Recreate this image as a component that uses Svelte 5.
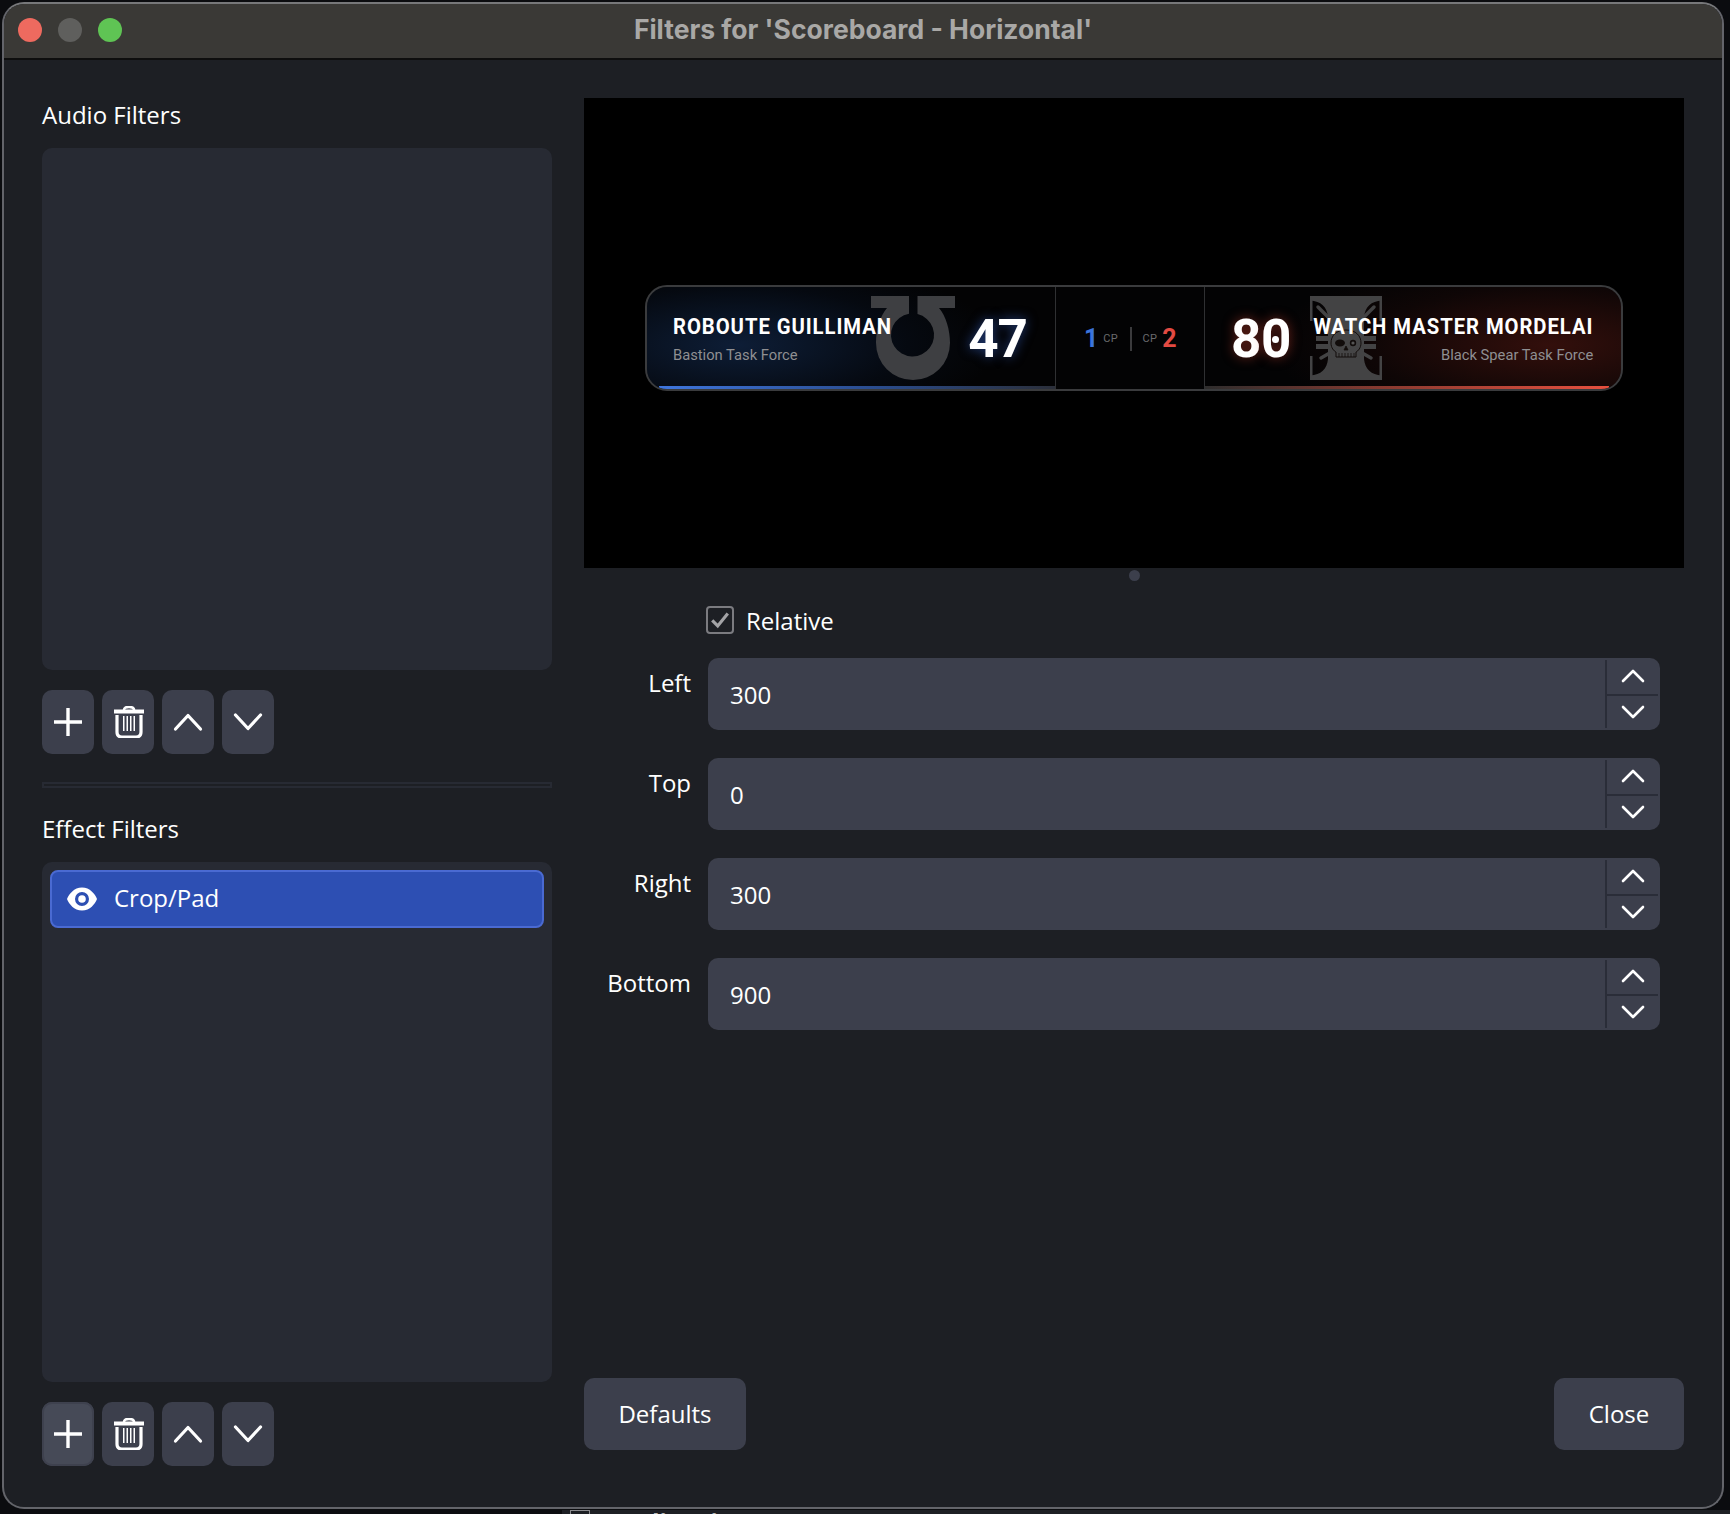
<script>
  const fields = [
    { label: 'Left', value: '300' },
    { label: 'Top', value: '0' },
    { label: 'Right', value: '300' },
    { label: 'Bottom', value: '900' }
  ];
</script>

{#snippet plus()}
  <svg class="ico" viewBox="0 0 32 32"><path d="M16 2V30M2 16H30" stroke="#fff" stroke-width="3.4" fill="none"/></svg>
{/snippet}
{#snippet trash()}
  <svg class="ico" viewBox="-1 0 32 32" fill="none" stroke="#fff">
    <path d="M1 5.5H31" stroke-width="4"/>
    <path d="M11 4C11 1.5 13 1 16 1S21 1.5 21 4" stroke-width="2.6"/>
    <path d="M4 9V26C4 29.500 6 31 9 31H23C26 31 28 29.500 28 26V9" stroke-width="3.2"/>
    <path d="M11.500 10V25M15 10V25M18.500 10V25M22 10V25" stroke-width="1.500" transform="translate(-.75 0)"/>
  </svg>
{/snippet}
{#snippet up()}
  <svg class="ico" viewBox="0 0 32 32"><path d="M3.500 23L16 9.500L28.500 23" stroke="#fff" stroke-width="3.2" stroke-linecap="round" stroke-linejoin="round" fill="none"/></svg>
{/snippet}
{#snippet down()}
  <svg class="ico" viewBox="0 0 32 32"><path d="M3.500 9L16 22.500L28.500 9" stroke="#fff" stroke-width="3.200" stroke-linecap="round" stroke-linejoin="round" fill="none"/></svg>
{/snippet}
{#snippet tools(hot)}
  <div class="tools">
    <button class="tool" class:hot>{@render plus()}</button>
    <button class="tool">{@render trash()}</button>
    <button class="tool">{@render up()}</button>
    <button class="tool">{@render down()}</button>
  </div>
{/snippet}

<div class="screen">
  <div class="behind"><span class="bcheck"></span><span class="btext">Audio Mixer</span></div>
  <div class="window">
    <header class="titlebar">
      <div class="lights"><i class="red"></i><i class="grey"></i><i class="green"></i></div>
      <div class="title">Filters for 'Scoreboard - Horizontal'</div>
    </header>
    <div class="body">
      <aside class="left">
        <div class="label first">Audio Filters</div>
        <div class="panel panel-a"></div>
        {@render tools(false)}
        <div class="sep"></div>
        <div class="label second">Effect Filters</div>
        <div class="panel panel-b">
          <div class="item">
            <svg class="eye" viewBox="0 0 30 24">
              <path fill-rule="evenodd" fill="#fff" d="M15 0.500C23 0.500 28 7 30 12C28 17 23 23.500 15 23.500S2 17 0 12C2 7 7 0.500 15 0.500ZM15 5A7 7 0 1 0 15 19A7 7 0 1 0 15 5Z"/>
              <circle cx="15" cy="12" r="3.800" fill="#fff"/>
            </svg>
            <span class="item-text">Crop/Pad</span>
          </div>
        </div>
        {@render tools(true)}
      </aside>

      <main class="right">
        <div class="preview">
          <div class="board">
            <div class="team home">
              <svg class="crest crest-home" viewBox="0 0 100 96">
                <path fill="#3e3f42" d="M11 6H49V23.800A21.500 21.500 0 1 0 57.500 24.100V6H95V18H79C86 26 90 40 90 53A37 37 0 0 1 16 53C16 40 20 26 27 18H11Z"/>
              </svg>
              <div class="who who-home">
                <div class="name">ROBOUTE GUILLIMAN</div>
                <div class="force">Bastion Task Force</div>
              </div>
              <div class="score sc-home">47</div>
            </div>
            <div class="cp">
              <span class="cpn blue">1</span><span class="cpl">CP</span>
              <span class="cpdiv"></span>
              <span class="cpl">CP</span><span class="cpn red-t">2</span>
            </div>
            <div class="team away">
              <svg class="crest crest-away" viewBox="0 0 100 96">
                <path fill="#434344" d="M11 6H83V10.500C72 11 66 17 65 27V69C66 79 72 85 83 85.500V90H11V85.500C22 85 28 79 29 69V27C28 17 22 11 11 10.500Z"/>
                <path d="M11 10V31H13.500V10ZM83 10V31H80.500V10ZM11 66V86H13.500V66ZM83 66V86H80.500V66Z" fill="#434344"/>
                <g stroke="#434344" stroke-width="3.500" stroke-linecap="round">
                  <path d="M19 17L31 29M75 17L63 29M22 68L36 60M72 68L58 60"/>
                </g>
                <g fill="#434344">
                  <rect x="17" y="46" width="14" height="5"/><rect x="17" y="54" width="15" height="5"/>
                  <rect x="63" y="46" width="14" height="5"/><rect x="62" y="54" width="15" height="5"/>
                </g>
                <path d="M47 40C37 40 32 46 32 53C32 58 35 61 37 62V67H57V62C59 61 62 58 62 53C62 46 57 40 47 40Z" fill="#454546" stroke="#120c0b" stroke-width="1"/>
                <ellipse cx="41" cy="53" rx="5" ry="3.500" fill="#110c0b"/>
                <circle cx="54" cy="53" r="3.200" fill="#110c0b"/><circle cx="54" cy="53" r="1.600" fill="#555"/>
                <path d="M47 56L45 60H49ZM40 63V67M43 63V67M46 63V67M49 63V67M52 63V67M55 63V67" stroke="#110c0b" stroke-width=".8" fill="#110c0b"/>
              </svg>
              <div class="score sc-away">8<span class="zero">0</span></div>
              <div class="who who-away">
                <div class="name">WATCH MASTER MORDELAI</div>
                <div class="force">Black Spear Task Force</div>
              </div>
            </div>
          </div>
        </div>
        <div class="handle"><i></i></div>

        <label class="check">
          <span class="box">
            <svg viewBox="0 0 24 24"><path d="M3.500 12.500L9.500 18.500L20.500 5" stroke="#a3a3a6" stroke-width="3.400" fill="none"/></svg>
          </span>
          <span>Relative</span>
        </label>

        <div class="form">
          {#each fields as f}
            <div class="flabel">{f.label}</div>
            <div class="spin">
              <div class="val">{f.value}</div>
              <div class="arrows">
                <div class="arrow arrow-t">
                  <svg viewBox="0 0 24 14"><path d="M2 12L12 2L22 12" stroke="#fff" stroke-width="2.600" stroke-linecap="round" stroke-linejoin="round" fill="none"/></svg>
                </div>
                <div class="arrow arrow-b">
                  <svg viewBox="0 0 24 14"><path d="M2 2L12 12L22 2" stroke="#fff" stroke-width="2.600" stroke-linecap="round" stroke-linejoin="round" fill="none"/></svg>
                </div>
              </div>
            </div>
          {/each}
        </div>

        <div class="actions">
          <button class="act defaults">Defaults</button>
          <button class="act close">Close</button>
        </div>
      </main>
    </div>
  </div>
</div>

<style>
  :global(body) { margin: 0; background: #0b0c0f; }
  * { box-sizing: border-box; }
  .screen {
    position: relative;
    width: 1730px;
    height: 1514px;
    overflow: hidden;
    padding: 2px 6px 0 2px;
    background: #0b0c0f;
    font-family: "Open Sans", "Noto Sans", sans-serif;
    color: #fff;
  }
  .behind {
    position: absolute;
    left: 562px;
    right: 0;
    top: 1510px;
    height: 30px;
    background: #1d1f24;
    display: flex;
    gap: 22px;
    padding-left: 8px;
  }
  .bcheck { width: 20px; height: 20px; border: 1.500px solid #8a8a8e; }
  .btext { font-weight: 700; font-size: 24px; color: #b9b9bb; line-height: 1; }
  .window {
    position: relative;
    width: 1722px;
    height: 1507px;
    border: 2px solid #63646a;
    border-top-color: #77787a;
    border-radius: 22px;
    background: #1d1f24;
    overflow: hidden;
  }
  .titlebar {
    position: relative;
    height: 56px;
    background: #3a3936;
    border-bottom: 2px solid #0e0e0e;
    display: flex;
    align-items: center;
    justify-content: center;
  }
  .lights {
    position: absolute;
    left: 14px;
    top: 13.500px;
    display: flex;
    gap: 16px;
  }
  .lights i { display: block; width: 24px; height: 24px; border-radius: 50%; }
  .red { background: #ee6a5f; }
  .grey { background: #5f5f5d; }
  .green { background: #5fc454; }
  .title {
    font-family: Inter, "Liberation Sans", sans-serif;
    font-weight: 700;
    font-size: 26.500px;
    color: #a9a8a6;
    margin-top: -5px;
  }
  .body {
    display: grid;
    grid-template-columns: 510px 1100px;
    column-gap: 32px;
    padding: 38px 0 0 38px;
    height: 1449px;
  }
  .left { display: flex; flex-direction: column; }
  .label {
    font-size: 24px;
    line-height: 34px;
  }
  .label.first { margin-bottom: 16px; }
  .label.second { margin-top: 24px; margin-bottom: 16px; }
  .panel {
    background: #272a33;
    border-radius: 10px;
    padding: 8px;
  }
  .panel-a { height: 522px; }
  .panel-b { height: 520px; }
  .tools { display: flex; gap: 8px; margin-top: 20px; }
  .tool {
    width: 52px;
    height: 64px;
    border: 0;
    padding: 0;
    border-radius: 10px;
    background: #3c3f4c;
    display: flex;
    align-items: center;
    justify-content: center;
  }
  .tool.hot { background: #464a57; box-shadow: inset 0 0 0 2px #3e414e; }
  .ico { width: 32px; height: 32px; display: block; }
  .sep {
    height: 6px;
    margin-top: 28px;
    border: 2px solid #272a33;
    background: #1d1f24;
  }
  .item {
    height: 58px;
    background: #2d4fb3;
    border: 2px solid #4a6ad2;
    border-radius: 8px;
    display: flex;
    align-items: center;
    padding-left: 15px;
    gap: 17px;
    font-size: 24px;
  }
  .item-text { margin-top: -3px; }
  .eye { width: 30px; height: 24px; flex: none; }

  .right { display: flex; flex-direction: column; height: 1352px; }
  .preview {
    height: 470px;
    background: #000;
    padding: 9px 61px 0;
    display: flex;
    align-items: center;
  }
  .board {
    width: 978px;
    height: 106px;
    border: 2px solid #3a3b3d;
    border-radius: 22px;
    overflow: hidden;
    display: flex;
    position: relative;
    background: #030304;
    font-family: Roboto, sans-serif;
  }
  .team { position: relative; display: flex; align-items: center; }
  .home {
    width: 409px;
    flex: none;
    padding: 0 28px 0 26px;
    justify-content: space-between;
    border-right: 1.500px solid #2f3032;
    background: radial-gradient(ellipse 260px 90px at 90px 58px, rgba(28, 66, 124, .42), rgba(14, 34, 66, .2) 65%, transparent 100%);
  }
  .away {
    flex: 1;
    padding: 0 28px 0 26px;
    justify-content: space-between;
    border-left: 1.500px solid #2f3032;
    background: radial-gradient(ellipse 280px 90px at 345px 58px, rgba(118, 32, 22, .42), rgba(60, 18, 14, .2) 65%, transparent 100%);
  }
  .home::after, .away::after {
    content: "";
    position: absolute;
    bottom: 0;
    height: 2.500px;
  }
  .home::after { left: 12px; right: 0; background: linear-gradient(90deg, #3f76dd, #2a4c8d 55%, #2b2f3a); }
  .away::after { right: 12px; left: 0; background: linear-gradient(270deg, #e6503f, #8a3a30 55%, #2e2d2d); }
  .crest { position: absolute; width: 100px; height: 96px; }
  .crest-home { left: 213px; top: 3px; }
  .crest-away { left: 94px; top: 3px; }
  .who { position: relative; display: flex; flex-direction: column; gap: 5px; margin-top: 1px; flex: none; }
  .who-home { width: 217px; }
  .who-away { width: 281px; align-items: flex-end; text-align: right; }
  .name {
    font-weight: 700;
    font-size: 22.500px;
    letter-spacing: 1.050px;
    line-height: 28px;
    white-space: nowrap;
    color: #fff;
    transform: scaleX(.9);
    transform-origin: left center;
  }
  .force {
    font-size: 15.500px;
    line-height: 20px;
    color: #8f8f92;
    white-space: nowrap;
    transform: scaleX(.95);
    transform-origin: left center;
  }
  .who-away .name, .who-away .force { transform-origin: right center; }
  .score {
    position: relative;
    font-weight: 700;
    font-size: 53px;
    line-height: 1;
    color: #fff;
    letter-spacing: -1px;
    margin-top: 4px;
    flex: none;
  }
  .sc-home { text-shadow: 0 0 12px rgba(60, 110, 220, .55); }
  .sc-away { text-shadow: 0 0 12px rgba(220, 70, 50, .5); letter-spacing: -.5px; }
  .zero { position: relative; }
  .zero::after {
    content: "";
    position: absolute;
    left: 50%;
    top: 50%;
    width: 7px;
    height: 7px;
    margin: -3px 0 0 -4px;
    background: #fff;
    border-radius: 50%;
  }
  .cp {
    flex: none;
    width: 148px;
    display: flex;
    align-items: center;
    padding-left: 28px;
    padding-top: 2px;
    font-weight: 700;
  }
  .cpn { font-size: 25px; line-height: 1; }
  .blue { color: #3b74db; }
  .red-t { color: #e24a42; }
  .cpl { font-size: 11px; color: #6a6a6d; font-weight: 400; margin: 0 5px; letter-spacing: .3px; }
  .cpdiv { width: 1.500px; height: 24px; background: #3b3b3d; margin: 0 6px 0 7px; }

  .handle { height: 14px; display: flex; justify-content: center; align-items: center; }
  .handle i { display: block; width: 11px; height: 11px; border-radius: 50%; background: #3c3f4c; }
  .check {
    display: flex;
    align-items: center;
    gap: 12px;
    margin: 24px 0 0 122px;
    height: 28px;
    font-size: 24px;
  }
  .box {
    width: 28px;
    height: 28px;
    border: 2px solid #7b7b80;
    border-radius: 4px;
    display: flex;
    align-items: center;
    justify-content: center;
  }
  .box svg { width: 22px; height: 22px; display: block; }
  .form {
    display: grid;
    grid-template-columns: 107px 952px;
    column-gap: 17px;
    row-gap: 28px;
    margin-top: 24px;
  }
  .flabel { text-align: right; font-size: 24px; line-height: 34px; padding-top: 8px; }
  .spin {
    height: 72px;
    background: #3c3f4c;
    border-radius: 10px;
    display: flex;
    justify-content: space-between;
  }
  .val { font-size: 24px; line-height: 74px; padding-left: 22px; }
  .arrows {
    width: 55px;
    margin: 2px 0 2px 2px;
    display: flex;
    flex-direction: column;
    border-left: 2px solid #2a2d38;
    padding-right: 2px;
  }
  .arrow { flex: 1; display: flex; align-items: center; justify-content: center; }
  .arrow-t { padding-bottom: 2px; }
  .arrow-b { border-top: 2px solid #2a2d38; }
  .arrow svg { width: 24px; height: 14px; display: block; }
  .actions { margin-top: auto; display: flex; justify-content: space-between; }
  .act {
    height: 72px;
    border: 0;
    border-radius: 10px;
    background: #3c3f4c;
    color: #fff;
    font-family: inherit;
    font-size: 24px;
    padding: 0 0 2px;
  }
  .defaults { width: 162px; }
  .close { width: 130px; }
</style>
